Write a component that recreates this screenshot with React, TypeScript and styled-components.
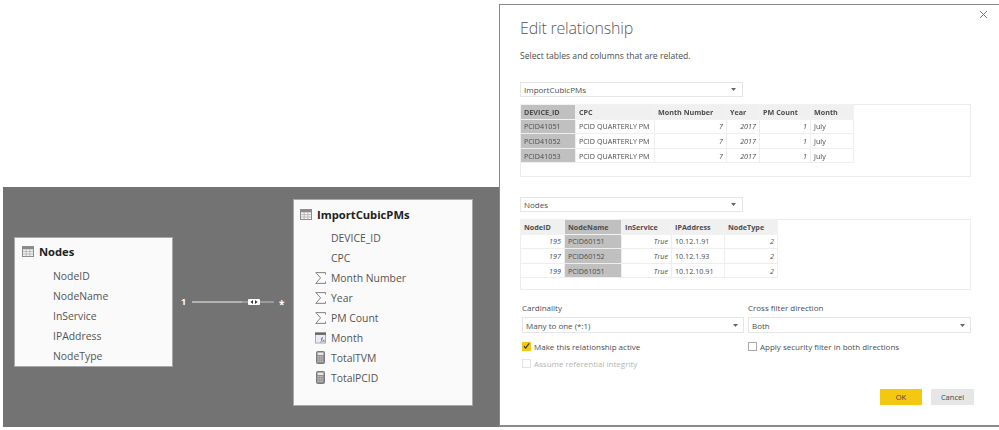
import styled, { createGlobalStyle } from 'styled-components';

const GlobalStyle = createGlobalStyle`
  html, body {
    margin: 0;
    padding: 0;
    background: #ffffff;
  }
  body {
    font-family: 'Open Sans', 'Noto Sans', sans-serif;
    color: #444444;
  }
`;

function TableIcon() {
  return (
    <svg width='12' height='11' viewBox='0 0 12 11'>
      <rect x='0.5' y='0.5' width='11' height='10' fill='#f4f4f4' stroke='#8c8c8c' />
      <rect x='1' y='1' width='10' height='2.3' fill='#8a8a8a' />
      <path d='M4.2 3.3v7M7.8 3.3v7M1 5.6h10M1 8h10' stroke='#b0b0b0' strokeWidth='0.8' fill='none' />
    </svg>
  );
}

function SigmaIcon() {
  return (
    <svg width='11' height='12' viewBox='0 0 11 12'>
      <path d='M10.5 2.5V0.6H0.8L5.6 5.8L0.8 11.4H10.5V9.5' stroke='#777777' strokeWidth='0.9' fill='none' />
    </svg>
  );
}

function CalcColumnIcon() {
  return (
    <svg width='12' height='12' viewBox='0 0 12 12'>
      <rect x='0.5' y='0.5' width='11' height='11' fill='#e9edf3' stroke='#a5a5a5' />
      <rect x='0' y='0' width='12' height='2.6' fill='#666666' />
      <path d='M6 10.5c1 0 1-1 1.2-2.5s.4-3 1.4-3M6.4 7h2.2M8.4 8l2 2.2M10.4 8l-2 2.2' stroke='#555555' strokeWidth='0.7' fill='none' />
    </svg>
  );
}

function MeasureIcon() {
  return (
    <svg width='9' height='13' viewBox='0 0 9 13'>
      <rect x='0.5' y='0.5' width='8' height='12' rx='1' fill='#8f8f8f' stroke='#7a7a7a' />
      <rect x='1.6' y='1.6' width='5.8' height='2.4' fill='#e6e6e6' />
      <path d='M1.6 5.8h5.8M1.6 8h5.8M1.6 10.2h5.8' stroke='#dddddd' strokeDasharray='1.2 0.8' fill='none' />
    </svg>
  );
}

function Connector() {
  return (
    <svg width='86' height='10' viewBox='0 0 86 10'>
      <path d='M0 5H50' stroke='#f2f2f2' strokeWidth='1' />
      <path d='M50 5H82' stroke='#c4c4c4' strokeWidth='1' />
      <rect x='56' y='2' width='12' height='6' rx='1' fill='#ffffff' />
      <path d='M61 3L58.5 5L61 7ZM63 3L65.5 5L63 7Z' fill='#333333' />
    </svg>
  );
}

function Caret() {
  return (
    <svg width='5' height='3' viewBox='0 0 5 3'>
      <path d='M0 0H5L2.5 3Z' fill='#666666' />
    </svg>
  );
}

const nodeFields = ['NodeID', 'NodeName', 'InService', 'IPAddress', 'NodeType'];

const importFields = [
  { name: 'DEVICE_ID' },
  { name: 'CPC' },
  { name: 'Month Number', icon: <SigmaIcon /> },
  { name: 'Year', icon: <SigmaIcon /> },
  { name: 'PM Count', icon: <SigmaIcon /> },
  { name: 'Month', icon: <CalcColumnIcon /> },
  { name: 'TotalTVM', icon: <MeasureIcon /> },
  { name: 'TotalPCID', icon: <MeasureIcon /> },
];

type Cell = { text: string; num?: boolean };
type Column = { title: string; width: number; key?: boolean };

const importColumns: Column[] = [
  { title: 'DEVICE_ID', width: 55, key: true },
  { title: 'CPC', width: 79 },
  { title: 'Month Number', width: 72 },
  { title: 'Year', width: 33 },
  { title: 'PM Count', width: 51 },
  { title: 'Month', width: 43 },
];

const importRows: Cell[][] = ['PCID41051', 'PCID41052', 'PCID41053'].map((id) => [
  { text: id },
  { text: 'PCID QUARTERLY PM' },
  { text: '7', num: true },
  { text: '2017', num: true },
  { text: '1', num: true },
  { text: 'July' },
]);

const nodeColumns: Column[] = [
  { title: 'NodeID', width: 44 },
  { title: 'NodeName', width: 57, key: true },
  { title: 'InService', width: 50 },
  { title: 'IPAddress', width: 53 },
  { title: 'NodeType', width: 53 },
];

const nodeRows: Cell[][] = [
  ['195', 'PCID60151', '10.12.1.91'],
  ['197', 'PCID60152', '10.12.1.93'],
  ['199', 'PCID61051', '10.12.10.91'],
].map(([id, name, ip]) => [
  { text: id, num: true },
  { text: name },
  { text: 'True', num: true },
  { text: ip },
  { text: '2', num: true },
]);

function Preview({ columns, rows, height }: { columns: Column[]; rows: Cell[][]; height: number }) {
  const total = columns.reduce((sum, c) => sum + c.width, 0);
  return (
    <PreviewPanel $height={height}>
      <PreviewTable $width={total}>
        <colgroup>
          {columns.map((c) => (
            <col key={c.title} width={c.width} />
          ))}
        </colgroup>
        <thead>
          <tr>
            {columns.map((c) => (
              <HeadCell key={c.title} $selected={c.key}>
                {c.title}
              </HeadCell>
            ))}
          </tr>
        </thead>
        <tbody>
          {rows.map((row, i) => (
            <tr key={i}>
              {row.map((cell, j) => (
                <BodyCell key={j} $num={cell.num} $selected={columns[j].key}>
                  {cell.text}
                </BodyCell>
              ))}
            </tr>
          ))}
        </tbody>
      </PreviewTable>
    </PreviewPanel>
  );
}

function App() {
  return (
    <Page>
      <GlobalStyle />
      <Canvas>
        <NodesCard>
          <CardTitle $after={5}>
            <TableIcon />
            Nodes
          </CardTitle>
          {nodeFields.map((f) => (
            <FieldRow key={f}>
              <FieldIcon />
              {f}
            </FieldRow>
          ))}
        </NodesCard>
        <OneLabel>1</OneLabel>
        <ConnectorLine>
          <Connector />
        </ConnectorLine>
        <ManyLabel>*</ManyLabel>
        <ImportCard>
          <CardTitle $after={3.5}>
            <TableIcon />
            ImportCubicPMs
          </CardTitle>
          {importFields.map((f) => (
            <FieldRow key={f.name}>
              <FieldIcon>{f.icon}</FieldIcon>
              {f.name}
            </FieldRow>
          ))}
        </ImportCard>
      </Canvas>
      <Dialog>
        <CloseButton>
          <svg width='9' height='9' viewBox='0 0 9 9'>
            <path d='M1 1L8 8M8 1L1 8' stroke='#777777' strokeWidth='1' fill='none' />
          </svg>
        </CloseButton>
        <Title>Edit relationship</Title>
        <Subtitle>Select tables and columns that are related.</Subtitle>
        <TableSelect>
          ImportCubicPMs
          <Caret />
        </TableSelect>
        <Preview columns={importColumns} rows={importRows} height={73} />
        <SecondSelect>
          Nodes
          <Caret />
        </SecondSelect>
        <Preview columns={nodeColumns} rows={nodeRows} height={71} />
        <OptionsGrid>
          <OptionColumn>
            <OptionLabel>Cardinality</OptionLabel>
            <OptionSelect>
              Many to one (*:1)
              <Caret />
            </OptionSelect>
            <CheckRow>
              <CheckBox $checked>
                <svg width='8' height='8' viewBox='0 0 8 8'>
                  <path d='M1 4.2L3 6.5L7 1' stroke='#333333' strokeWidth='1.3' fill='none' />
                </svg>
              </CheckBox>
              Make this relationship active
            </CheckRow>
            <CheckRow $disabled>
              <CheckBox $disabled />
              Assume referential integrity
            </CheckRow>
          </OptionColumn>
          <OptionColumn>
            <OptionLabel>Cross filter direction</OptionLabel>
            <OptionSelect>
              Both
              <Caret />
            </OptionSelect>
            <CheckRow>
              <CheckBox />
              Apply security filter in both directions
            </CheckRow>
          </OptionColumn>
        </OptionsGrid>
        <Footer>
          <PrimaryButton>OK</PrimaryButton>
          <SecondaryButton>Cancel</SecondaryButton>
        </Footer>
      </Dialog>
    </Page>
  );
}
export default App;

const Page = styled.div`
  width: 999px;
  height: 430px;
  display: flex;
  align-items: flex-end;
  padding: 4px 0 3px 3px;
  box-sizing: border-box;
  overflow: hidden;
  filter: blur(0.3px);
`;

const Canvas = styled.div`
  position: relative;
  width: 496px;
  height: 240px;
  flex: none;
  background: #737373;
`;

const Card = styled.div`
  position: absolute;
  box-sizing: border-box;
  background: #fafafa;
  border: 1px solid #a8a8a8;
`;

const NodesCard = styled(Card)`
  left: 11px;
  top: 50px;
  width: 159px;
  height: 130px;
  padding: 3px 0 0 7px;
`;

const ImportCard = styled(Card)`
  left: 290px;
  top: 12px;
  width: 180px;
  height: 207px;
  padding: 4px 0 0 6px;
`;

const CardTitle = styled.div<{ $after: number }>`
  display: flex;
  align-items: center;
  gap: 5px;
  height: 20px;
  margin-bottom: ${(p) => p.$after}px;
  font-size: 11.2px;
  font-weight: 700;
  color: #222222;
`;

const FieldRow = styled.div`
  display: flex;
  align-items: center;
  height: 20px;
  font-size: 10.4px;
  color: #555555;
`;

const FieldIcon = styled.span`
  width: 31px;
  flex: none;
  display: flex;
  justify-content: center;
  box-sizing: border-box;
  padding: 0 5px 0 15px;
`;

const OneLabel = styled.span`
  position: absolute;
  left: 178px;
  top: 108px;
  font-size: 9px;
  font-weight: 700;
  color: #ffffff;
`;

const ConnectorLine = styled.div`
  position: absolute;
  left: 189px;
  top: 110px;
  line-height: 0;
`;

const ManyLabel = styled.span`
  position: absolute;
  left: 276px;
  top: 110px;
  font-size: 10px;
  font-weight: 700;
  color: #ffffff;
`;

const Dialog = styled.div`
  position: relative;
  flex: none;
  width: 500px;
  height: 423px;
  box-sizing: border-box;
  background: #ffffff;
  border: solid #8a8a8a;
  border-width: 1px 0 2px 1px;
  padding: 11px 29px 0 20px;
`;

const CloseButton = styled.div`
  position: absolute;
  top: 5px;
  right: 11px;
  line-height: 0;
`;

const Title = styled.h1`
  margin: 0;
  font-size: 16px;
  font-weight: 300;
  letter-spacing: -0.2px;
  line-height: 24px;
  color: #5a5a5a;
`;

const Subtitle = styled.p`
  margin: 9px 0 0;
  font-size: 8.6px;
  line-height: 14px;
  color: #4d4d4d;
`;

const SelectBox = styled.div`
  display: flex;
  align-items: center;
  justify-content: space-between;
  box-sizing: border-box;
  background: #ffffff;
  border: 1px solid #e6e6e6;
  font-size: 8px;
  color: #4d4d4d;
`;

const TableSelect = styled(SelectBox)`
  width: 223px;
  height: 15px;
  margin-top: 19px;
  padding: 0 6px 0 3px;
`;

const SecondSelect = styled(TableSelect)`
  margin-top: 20px;
  margin-bottom: 1px;
`;

const PreviewPanel = styled.div<{ $height: number }>`
  box-sizing: border-box;
  width: 451px;
  height: ${(p) => p.$height}px;
  margin-top: 7px;
  box-shadow: inset 0 0 0 1px #ececec;
`;

const PreviewTable = styled.table<{ $width: number }>`
  width: ${(p) => p.$width}px;
  border-collapse: collapse;
  table-layout: fixed;
  font-size: 7.2px;
  color: #4d4d4d;
`;

const HeadCell = styled.th<{ $selected?: boolean }>`
  height: 14.6px;
  padding: 0 3px;
  box-sizing: border-box;
  text-align: left;
  font-weight: 700;
  white-space: nowrap;
  overflow: hidden;
  background: ${(p) => (p.$selected ? '#c0c0c0' : '#f0f0f0')};
  border: 1px solid #f2f2f2;
`;

const BodyCell = styled.td<{ $num?: boolean; $selected?: boolean }>`
  height: 14.6px;
  padding: 0 3px;
  box-sizing: border-box;
  white-space: nowrap;
  overflow: hidden;
  text-align: ${(p) => (p.$num ? 'right' : 'left')};
  font-style: ${(p) => (p.$num ? 'italic' : 'normal')};
  background: ${(p) => (p.$selected ? '#c0c0c0' : '#ffffff')};
  border: 1px solid #eeeeee;
`;

const OptionsGrid = styled.div`
  display: grid;
  grid-template-columns: 222px 223px;
  column-gap: 4px;
  margin: 11px 0 0 2px;
`;

const OptionColumn = styled.div`
  display: flex;
  flex-direction: column;
`;

const OptionLabel = styled.div`
  font-size: 8px;
  line-height: 13px;
  color: #4d4d4d;
`;

const OptionSelect = styled(SelectBox)`
  height: 16px;
  margin-top: 3px;
  padding: 0 5px 0 3px;
`;

const CheckRow = styled.div<{ $disabled?: boolean }>`
  display: flex;
  align-items: center;
  gap: 3px;
  height: 14px;
  margin-top: 6px;
  font-size: 8px;
  color: ${(p) => (p.$disabled ? '#b5b5b5' : '#4d4d4d')};
  & + & {
    margin-top: 3px;
  }
`;

const CheckBox = styled.span<{ $checked?: boolean; $disabled?: boolean }>`
  width: 9px;
  height: 9px;
  box-sizing: border-box;
  flex: none;
  display: flex;
  align-items: center;
  justify-content: center;
  background: ${(p) => (p.$checked ? '#f2c811' : '#ffffff')};
  border: 1px solid ${(p) => (p.$checked ? '#f2c811' : p.$disabled ? '#e4e4e4' : '#aaaaaa')};
`;

const Footer = styled.div`
  display: flex;
  justify-content: flex-end;
  gap: 9px;
  margin-top: 19px;
  width: 454px;
`;

const PrimaryButton = styled.div`
  width: 42px;
  height: 16px;
  display: flex;
  align-items: center;
  justify-content: center;
  font-size: 7.5px;
  color: #444444;
  background: #f2c811;
`;

const SecondaryButton = styled(PrimaryButton)`
  width: 43px;
  background: #e6e6e6;
`;
